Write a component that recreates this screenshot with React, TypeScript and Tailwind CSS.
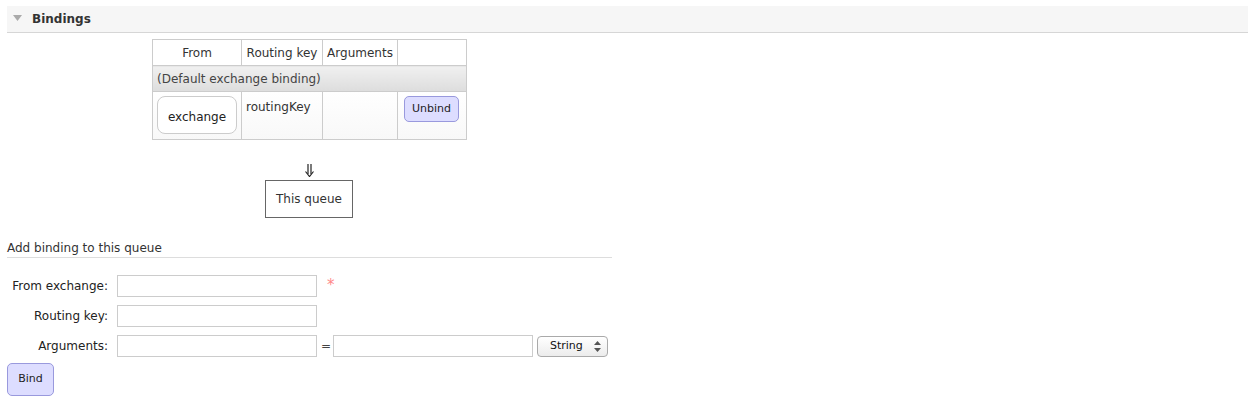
import React from "react";

export default function App() {
  const font = { fontFamily: '"DejaVu Sans", Verdana, sans-serif' };
  return (
    <div className="w-[1255px] h-[402px] bg-white text-[12px] text-[#333] relative overflow-hidden" style={font}>
      <div className="pt-[6px] px-[7px]">
        <div className="h-[27px] bg-[#f6f6f6] border-b border-[#d6d6d6] flex items-center">
          <svg width="9" height="7" viewBox="0 0 9 7" className="ml-[6px] mt-[-2px]">
            <polygon points="0,0 9,0 4.5,6" fill="#aaaaaa" />
          </svg>
          <span className="ml-[10px] font-bold text-[12px] text-[#333]">Bindings</span>
        </div>
      </div>

      <div className="ml-[152px] mt-[6px]">
        <table className="border-collapse border border-[#ccc] text-[12px]">
          <thead>
            <tr className="h-[26px]">
              <th className="font-normal border border-[#ccc] w-[89px] text-center">From</th>
              <th className="font-normal border border-[#ccc] w-[81px] text-center">Routing key</th>
              <th className="font-normal border border-[#ccc] w-[75px] text-center">Arguments</th>
              <th className="font-normal border border-[#ccc] w-[69px]"></th>
            </tr>
          </thead>
          <tbody>
            <tr className="h-[26px]">
              <td colSpan={4} className="border border-[#ccc] px-[4px] bg-gradient-to-b from-[#f0f0f0] to-[#dddddd] text-[#444]">
                (Default exchange binding)
              </td>
            </tr>
            <tr className="h-[48px] bg-gradient-to-b from-white to-[#f8f8f8]">
              <td className="border border-[#ccc] px-[4px] py-[4px] align-top">
                <div className="w-[80px] h-[38px] border border-[#ccc] rounded-[8px] bg-white flex items-center justify-center text-[#222] pt-[3px]">
                  exchange
                </div>
              </td>
              <td className="border border-[#ccc] px-[4px] pt-[6px] align-top text-[#333]">routingKey</td>
              <td className="border border-[#ccc]"></td>
              <td className="border border-[#ccc] align-top pt-[4px] pl-[6px]">
                <button className="w-[55px] h-[26px] bg-[#ddddff] border border-[#9999dd] rounded-[5px] text-[11px] text-[#222]">
                  Unbind
                </button>
              </td>
            </tr>
          </tbody>
        </table>
      </div>

      <div className="ml-[265px] w-[88px] flex flex-col items-center mt-[24px]">
        <svg width="9" height="13" viewBox="0 0 9 13">
          <line x1="3" y1="0" x2="3" y2="10" stroke="#222" strokeWidth="1.2" />
          <line x1="6" y1="0" x2="6" y2="10" stroke="#222" strokeWidth="1.2" />
          <polyline points="0.5,7.5 4.5,12.5 8.5,7.5" fill="none" stroke="#222" strokeWidth="1.2" />
        </svg>
        <div className="mt-[3px] w-[88px] h-[38px] border border-[#666] flex items-center justify-center text-[#333]">
          This queue
        </div>
      </div>

      <div className="mx-[7px] w-[605px] mt-[21px] border-b border-[#ddd] pb-0 text-[12px] text-[#333]">
        Add binding to this queue
      </div>

      <div className="mt-[17px] flex flex-col gap-[8px]">
        <div className="flex items-center h-[22px]">
          <label className="w-[108px] text-right text-[#222]">From exchange:</label>
          <input className="ml-[9px] w-[200px] h-[22px] border border-[#ccc] outline-none" />
          <span className="ml-[10px] text-[#f88] text-[15px] leading-[15px] mt-[-2px]">*</span>
        </div>
        <div className="flex items-center h-[22px]">
          <label className="w-[108px] text-right text-[#222]">Routing key:</label>
          <input className="ml-[9px] w-[200px] h-[22px] border border-[#ccc] outline-none" />
        </div>
        <div className="flex items-center h-[22px]">
          <label className="w-[108px] text-right text-[#222]">Arguments:</label>
          <input className="ml-[9px] w-[200px] h-[22px] border border-[#ccc] outline-none" />
          <span className="ml-[4px] w-[12px] text-[#444]">=</span>
          <input className="w-[200px] h-[22px] border border-[#ccc] outline-none" />
          <div className="ml-[4px] w-[71px] h-[21px] border border-[#aaa] rounded-[4px] bg-gradient-to-b from-white to-[#ececec] flex items-center text-[11px] text-[#111]">
            <span className="ml-[12px] flex-1">String</span>
            <svg width="7" height="11" viewBox="0 0 7 11" className="mr-[6px]">
              <polygon points="3.5,0 7,4 0,4" fill="#555" />
              <polygon points="0,7 7,7 3.5,11" fill="#555" />
            </svg>
          </div>
        </div>
      </div>

      <div className="ml-[7px] mt-[6px]">
        <button className="w-[47px] h-[33px] bg-[#ddddff] border border-[#9999dd] rounded-[5px] text-[11px] text-[#222]">
          Bind
        </button>
      </div>
    </div>
  );
}
